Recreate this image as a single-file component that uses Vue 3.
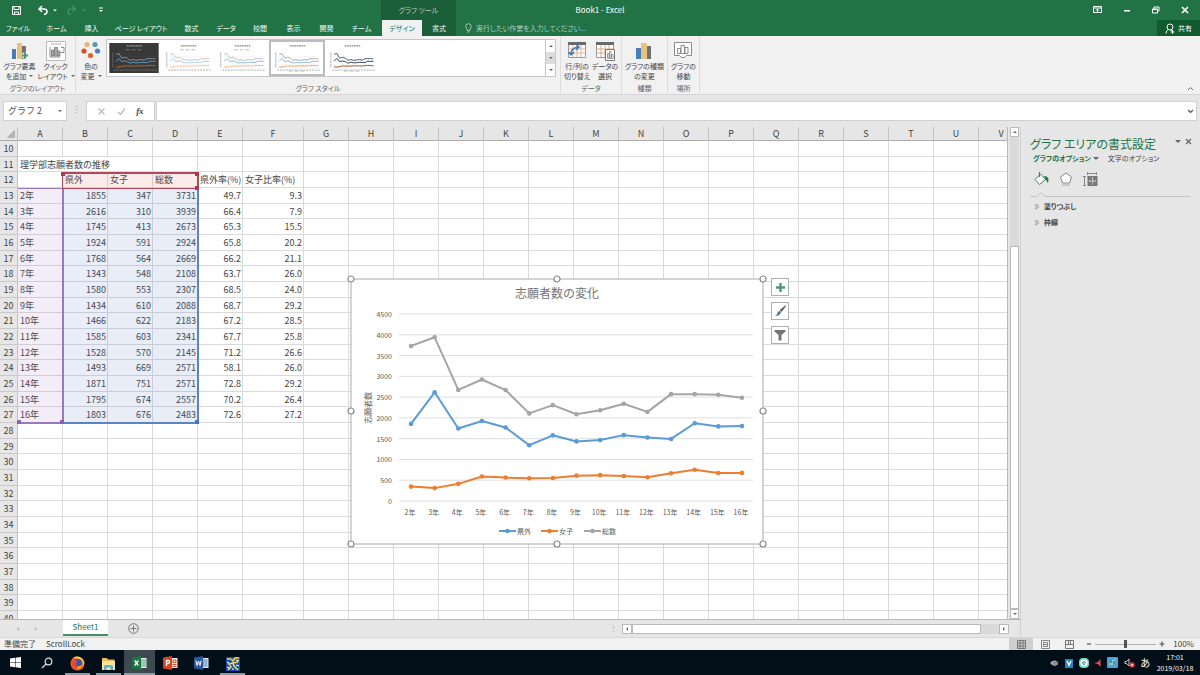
<script setup>
import { ref } from 'vue'

const tabs = ['ファイル', 'ホーム', '挿入', 'ページ レイアウト', '数式', 'データ', '校閲', '表示', '開発', 'チーム', 'デザイン', '書式']
const columns = 'ABCDEFGHIJKLMNOPQRSTUV'.split('')

const records = [
  ['2年', 1855, 347, 3731, '49.7', '9.3'],
  ['3年', 2616, 310, 3939, '66.4', '7.9'],
  ['4年', 1745, 413, 2673, '65.3', '15.5'],
  ['5年', 1924, 591, 2924, '65.8', '20.2'],
  ['6年', 1768, 564, 2669, '66.2', '21.1'],
  ['7年', 1343, 548, 2108, '63.7', '26.0'],
  ['8年', 1580, 553, 2307, '68.5', '24.0'],
  ['9年', 1434, 610, 2088, '68.7', '29.2'],
  ['10年', 1466, 622, 2183, '67.2', '28.5'],
  ['11年', 1585, 603, 2341, '67.7', '25.8'],
  ['12年', 1528, 570, 2145, '71.2', '26.6'],
  ['13年', 1493, 669, 2571, '58.1', '26.0'],
  ['14年', 1871, 751, 2571, '72.8', '29.2'],
  ['15年', 1795, 674, 2557, '70.2', '26.4'],
  ['16年', 1803, 676, 2483, '72.6', '27.2'],
]

const rows = []
for (let n = 10; n <= 40; n++) {
  const cells = columns.map(() => ({ text: '', span: 1 }))
  if (n === 11) cells.splice(0, 3, { text: '理学部志願者数の推移', span: 3 })
  if (n === 12) ['', '県外', '女子', '総数', '県外率(%)', '女子比率(%)'].forEach((t, i) => { cells[i].text = t })
  if (n >= 13 && n <= 27) records[n - 13].forEach((t, i) => { cells[i].text = t; cells[i].num = i > 0 })
  rows.push({ n, cells })
}

const px = i => 60 + (i * 331) / 14
const py = v => 222 - (v * 187) / 4500
const series = [
  { name: '総数', col: 3, color: '#a5a5a5', lx: 233 },
  { name: '県外', col: 1, color: '#5b9bd5', lx: 148 },
  { name: '女子', col: 2, color: '#ed7d31', lx: 190 },
].map(s => ({ ...s, pts: records.map((r, i) => [px(i), py(r[s.col])]) }))
const line = pts => pts.map(p => p.join(',')).join(' ')
const ticks = [0, 500, 1000, 1500, 2000, 2500, 3000, 3500, 4000, 4500]
const handles = [[0, 0], [206, 0], [412, 0], [0, 132], [412, 132], [0, 265], [206, 265], [412, 265]]

const mini = col => records.map((r, i) => `${7 + i * 2.9},${26 - r[col] / 260}`).join(' ')
const styles = [
  { key: 'a', dark: true, c: ['#87919a', '#5e9bc8', '#b36b3c'], legend: 7 },
  { key: 'b', c: ['#c3c8cc', '#acd0ec', '#f5c09c'], legend: 7 },
  { key: 'c', c: ['#bcc0c4', '#90bce2', '#f1b088'], legend: 7 },
  { key: 'd', selected: true, c: ['#aaaeb2', '#8fb8dc', '#eb9d6c'], legend: 29 },
  { key: 'e', c: ['#3f5f82', '#39424c', '#9a5030'], legend: 29 },
]
const zoom = ref(50)
const nameBox = ref('グラフ 2')
const formula = ref('')
</script>

<template>
  <div class="app">
    <header class="titlebar">
      <div class="title-left">
        <div class="qat">
          <button aria-label="上書き保存"><svg width="11" height="11" viewBox="0 0 11 11" fill="none" stroke="#fff"><path d="M1.5 1.5h8v8h-8zM3 1.5v3h5v-3M3.5 9.500v-2.500h4v2.500" /></svg></button>
          <button aria-label="元に戻す"><svg width="20" height="11" viewBox="0 0 20 11" fill="none" stroke="#fff" stroke-width="1.500"><path d="M5 1L2 4l3 3M2 4h5q3 0 3 2.500T7 9.500" /><path d="M16 4.500h4l-2 2z" fill="#fff" stroke="none" /></svg></button>
          <button aria-label="やり直し"><svg width="20" height="11" viewBox="0 0 20 11" fill="none" stroke="#4e9470" stroke-width="1.200"><path d="M6.500 1l3 3-3 3M9.500 4h-5Q2 4 2 6.500T4.500 9.500" /><path d="M16 4.500h4l-2 2z" fill="#4e9470" stroke="none" /></svg></button>
          <button aria-label="カスタマイズ"><svg width="6" height="8" viewBox="0 0 6 8"><path d="M1 1.500h4v1H1zM1 4h4L3 6z" fill="#fff" /></svg></button>
        </div>
        <div class="context">グラフ ツール</div>
      </div>
      <div class="doc">Book1 - Excel</div>
      <div class="win">
        <button aria-label="リボンの表示オプション"><svg width="9" height="8" fill="none" stroke="#fff"><path d="M.5.5h8v6h-8zM.5 2h8M4.500 6V3M3 4.500L4.500 3 6 4.500" /></svg></button>
        <button aria-label="最小化"><svg width="8" height="8"><path d="M1 4h6v1.500H1z" fill="#fff" /></svg></button>
        <button aria-label="元のサイズ"><svg width="8" height="8" fill="none" stroke="#fff"><path d="M.5 3h5v4h-5zM2 3V1h5v4H5.500M.5 3.500h5" /></svg></button>
        <button aria-label="閉じる"><svg width="8" height="8" stroke="#fff" stroke-width="1.700"><path d="M1 1l6 6M7 1L1 7" /></svg></button>
      </div>
    </header>
    <nav class="tabs">
      <div class="tablist">
        <button v-for="(t, i) in tabs" :key="t" :class="{ active: i === 10, ctx: i === 11 }">{{ t }}</button>
      </div>
      <button class="tell"><svg width="7" height="11" viewBox="0 0 7 11" fill="none" stroke="#c5dccf" stroke-width=".8"><path d="M2.300 7.500Q2.300 6 1.300 5 .2 3 1.300 1.600q2.200-2 4.400 0 1.100 1.400 0 3.400-1 1-1 2.500zM2.300 9h2.400" /></svg>実行したい作業を入力してください...</button>
      <button class="share"><svg width="10" height="11" viewBox="0 0 10 11" fill="none" stroke="#fff"><circle cx="5" cy="4" r="3" /><path d="M1 10.500Q1 7.500 3.500 6.500M6 7l1 1M7.500 7v4M5.500 9h4" /></svg>共有</button>
    </nav>

    <section class="ribbon">
      <div class="group g1">
        <div class="tools">
          <button class="big"><svg width="20" height="20" viewBox="0 0 20 20"><path d="M2 8h4v10H2z" fill="#4a7ebb" /><path d="M7 2h5v16H7z" fill="#e8c37b" /><path d="M12 5h4v13h-4z" fill="#6d7373" /><path d="M12 14.500h6M15 11.500v6" stroke="#eef0ee" stroke-width="4" /><path d="M12 14.500h6M15 11.500v6" stroke="#4a9b74" stroke-width="2" /></svg>グラフ要素<br>を追加<i class="dd" /></button>
          <button class="big"><svg width="20" height="20" viewBox="0 0 20 20" fill="none" stroke="#8b8b8b"><path d="M.5.5h19v19H.5z" fill="#fff" stroke="#bbb" /><path d="M5 3h10" stroke-dasharray="1.500 .7" /><path d="M4 6v10h10" /><path d="M5.500 9h2v6h-2zM8.500 6.500h3v8.500h-3zM12 10h2v5h-2z" fill="#aaa" /><path d="M15 6.500h3v5h-3" /></svg>クイック<br>レイアウト<i class="dd" /></button>
        </div>
        <div class="caption">グラフのレイアウト</div>
      </div>
      <div class="group g2">
        <div class="tools">
          <button class="big color"><svg width="20" height="20" viewBox="0 0 20 20"><circle cx="6" cy="3.500" r="2.600" fill="#eab676" /><circle cx="14" cy="3.500" r="2.600" fill="#5b9ca6" /><circle cx="3" cy="10" r="2.600" fill="#d0532b" /><circle cx="16.500" cy="10" r="2.600" fill="#4c83bd" /><circle cx="9.500" cy="14.500" r="2.600" fill="#e2632b" /></svg>色の<br>変更<i class="dd" /></button>
          <div class="gallery">
            <button v-for="s in styles" :key="s.key" class="thumb" :class="{ selected: s.selected }" :aria-label="'スタイル ' + s.key">
              <svg width="50" height="30" viewBox="0 0 51 31" fill="none">
                <rect width="51" height="31" :fill="s.dark ? '#383838' : '#fff'" />
                <path d="M18 3h16" :stroke="s.dark ? '#999' : '#888'" stroke-width="1.300" stroke-dasharray="1.800 .6" />
                <path d="M3.500 10v16" :stroke="s.dark ? '#6a6a6a' : '#aaa'" stroke-width="1.500" stroke-dasharray="1 1" />
                <path d="M5 28h44" :stroke="s.dark ? '#888' : '#999'" stroke-dasharray="2 1" stroke-width=".8" />
                <path :d="`M17 ${s.legend}h17`" :stroke="s.dark ? '#888' : '#aaa'" stroke-dasharray="4 2" stroke-width=".8" />
                <path d="M6 14h43M6 18h43M6 22h43M6 26h43" :stroke="s.dark ? '#484848' : '#eee'" stroke-width=".5" />
                <polyline v-for="(col, i) in [3, 1, 2]" :key="col" :points="mini(col)" :stroke="s.c[i]" />
              </svg>
            </button>
            <div class="gscroll">
              <button aria-label="上へ"><i class="up" /></button>
              <button aria-label="下へ" class="mid"><i class="down" /></button>
              <button aria-label="その他"><i class="down more" /></button>
            </div>
          </div>
        </div>
        <div class="caption">グラフ スタイル</div>
      </div>
      <div class="group g3">
        <div class="tools">
          <button class="big"><svg width="20" height="20" viewBox="0 0 20 20" fill="none"><path d="M1.500 1.500h17v15h-17z" fill="#fff" stroke="#999" /><path d="M1 1h18v3H1z" fill="#696969" /><path d="M6 4v12M10 4v12M14 4v12M2 8h16M2 12h16" stroke="#e0b294" /><path d="M4 13Q4 7 11 6M9 3.500L12 6 9 9M1.500 11L4 14l3-3" stroke="#3a78b5" stroke-width="1.500" /></svg>行/列の<br>切り替え</button>
          <button class="big"><svg width="20" height="20" viewBox="0 0 20 20" fill="none"><path d="M1.500 1.500h17v15h-17z" fill="#fff" stroke="#999" /><path d="M1 1h18v3H1z" fill="#696969" /><path d="M6 4v12M10 4v12M14 4v12M2 8h16M2 12h16" stroke="#d8a98e" /><path d="M10.500 8.500h9v11h-9z" fill="#fff" stroke="#777" /><path d="M12.500 12.500h1.500v5h-1.500zM14.500 10.500H16v7h-1.500zM16.500 13.500H18v4h-1.500z" stroke="#777" stroke-width=".7" /></svg>データの<br>選択</button>
        </div>
        <div class="caption">データ</div>
      </div>
      <div class="group g4">
        <div class="tools">
          <button class="big"><svg width="20" height="20" viewBox="0 0 20 20"><path d="M2 7h5v11H2z" fill="#4a7ebb" /><path d="M7 2h6v16H7z" fill="#e8c37b" /><path d="M13 5h4v13h-4z" fill="#6d7373" /></svg>グラフの種類<br>の変更</button>
        </div>
        <div class="caption">種類</div>
      </div>
      <div class="group g5">
        <div class="tools">
          <button class="big"><svg width="20" height="20" viewBox="0 0 20 20" fill="none" stroke="#8b8b8b"><path d="M1.500 1.500h17v13h-5l-2 2h-3l-2-2h-5z" fill="#fff" /><path d="M4.500 7.500h3v5h-3zM8 4.500h3.500v8H8zM12 6.500h3v6h-3z" /></svg>グラフの<br>移動</button>
        </div>
        <div class="caption">場所</div>
      </div>
      <button class="collapse" aria-label="リボンを折りたたむ"><svg width="7" height="5" fill="none" stroke="#666"><path d="M1 4l2.500-2.500L6 4" /></svg></button>
    </section>

    <section class="formula">
      <div class="namebox"><input v-model="nameBox" aria-label="名前ボックス"><i class="dd" /></div>
      <span class="dots">⋮</span>
      <div class="fx">
        <button aria-label="キャンセル"><svg width="9" height="9" stroke="#bbb" stroke-width="1.300"><path d="M1.500 1.500l6 6M7.500 1.500l-6 6" /></svg></button>
        <button aria-label="入力"><svg width="9" height="9" fill="none" stroke="#bbb" stroke-width="1.300"><path d="M1 5l2.500 2.500L8 1.500" /></svg></button>
        <button class="fn" aria-label="関数の挿入"><em>fx</em></button>
      </div>
      <div class="finput"><input v-model="formula" aria-label="数式バー"><svg width="7" height="5" fill="none" stroke="#555" stroke-width="1.200"><path d="M1 1l2.500 2.500L6 1" /></svg></div>
    </section>

    <main class="work">
      <div class="book">
        <div class="sheetrow">
          <div class="sheet">
            <table>
              <colgroup><col class="rh"><col v-for="c in columns" :key="c" :class="{ wide: c === 'F' }"></colgroup>
              <thead><tr><th class="corner"><i /></th><th v-for="c in columns" :key="c" scope="col">{{ c }}</th></tr></thead>
              <tbody>
                <tr v-for="r in rows" :key="r.n">
                  <th scope="row">{{ r.n }}</th>
                  <td v-for="(c, i) in r.cells" :key="i" :colspan="c.span" :class="{ num: c.num }">{{ c.text }}</td>
                </tr>
              </tbody>
            </table>
            <div class="range purple"><i class="bl" /><i class="br" /></div>
            <div class="range blue"><i class="br" /></div>
            <div class="range red"><i class="tl" /><i class="tr" /><i class="br" /></div>
            <svg class="chart" width="424" height="276" viewBox="-6 -6 424 276">
              <rect x="0" y="0" width="412" height="265" fill="#fff" stroke="#a9a9a9" />
              <text x="206" y="19" class="ctitle">志願者数の変化</text>
              <g v-for="t in ticks" :key="t">
                <line x1="48" x2="402" :y1="py(t)" :y2="py(t)" stroke="#dedede" />
                <text x="41" :y="py(t) + 3" class="ylab">{{ t }}</text>
              </g>
              <text v-for="(r, i) in records" :key="r[0]" :x="px(i) - 1" y="236" class="xlab">{{ r[0] }}</text>
              <text transform="translate(20 129) rotate(-90)" class="atitle">志願者数</text>
              <g v-for="s in series" :key="s.name" :stroke="s.color" :fill="s.color">
                <polyline :points="line(s.pts)" fill="none" stroke-width="2" stroke-linejoin="round" />
                <circle v-for="(p, i) in s.pts" :key="i" :cx="p[0]" :cy="p[1]" r="2.300" stroke="none" />
                <line :x1="s.lx" :x2="s.lx + 17" y1="252" y2="252" stroke-width="2" />
                <circle :cx="s.lx + 8.5" cy="252" r="2.300" stroke="none" />
                <text :x="s.lx + 18" y="255" class="leg">{{ s.name }}</text>
              </g>
              <circle v-for="(h, i) in handles" :key="'h' + i" :cx="h[0]" :cy="h[1]" r="3" fill="#fff" stroke="#8a8a8a" stroke-width="1.200" />
            </svg>
            <div class="chartbtns">
              <button aria-label="グラフ要素"><svg width="11" height="11"><path d="M1 5.500h9M5.500 1v9" stroke="#4d9a78" stroke-width="2.400" /></svg></button>
              <button aria-label="グラフ スタイル"><svg width="12" height="12"><path d="M11.500.5L6 5l1.500 1.800L11.500 1.500z" fill="#666" stroke="#666" stroke-width=".6" /><path d="M5.500 5.500L7 7.500Q6 11 1 11 3.500 9.500 3.500 7.500z" fill="#477fae" /></svg></button>
              <button aria-label="グラフ フィルター"><svg width="12" height="12"><path d="M.5 1h11v1.500L7.500 6v5.500h-3V6L.5 2.500z" fill="#757575" /></svg></button>
            </div>
          </div>
          <div class="vscroll">
            <button aria-label="上へスクロール"><i class="up" /></button>
            <div class="vtrack"><div class="vthumb" /></div>
            <button aria-label="下へスクロール"><i class="down" /></button>
          </div>
        </div>
        <div class="sheettabs">
          <div class="navs"><button aria-label="前のシート"><i class="left" /></button><button aria-label="次のシート"><i class="right" /></button></div>
          <button class="stab">Sheet1</button>
          <button class="add" aria-label="新しいシート"><svg width="11" height="11" fill="none" stroke="#777"><circle cx="5.500" cy="5.500" r="4.800" /><path d="M2.500 5.500h6M5.500 2.500v6" /></svg></button>
          <span class="grip">⋮</span>
          <div class="hscroll">
            <button aria-label="左へスクロール"><i class="left" /></button>
            <div class="htrack"><div class="hthumb" /></div>
            <button aria-label="右へスクロール"><i class="right" /></button>
          </div>
        </div>
      </div>
      <aside class="pane">
        <div class="phead"><h2>グラフ エリアの書式設定</h2>
          <div class="pctl"><button aria-label="作業ウィンドウ オプション"><i class="dd" /></button><button aria-label="作業ウィンドウを閉じる"><svg width="7" height="7" stroke="#666" stroke-width="1.300"><path d="M1 1l5 5M6 1L1 6" /></svg></button></div>
        </div>
        <div class="popts"><button class="on">グラフのオプション</button><i class="dd" /><button>文字のオプション</button></div>
        <div class="picons">
          <button aria-label="塗りつぶしと線"><svg width="16" height="16" fill="none"><path d="M2 8.500L7.500 3l5 5.500-6 5z" fill="#fff" stroke="#4a7a62" /><path d="M6.500 1v5" stroke="#4a7a62" stroke-width="1.200" /><path d="M11 5q3.500-.5 4.500 3.500l-.5 3.500-2-3z" fill="#217346" /></svg></button>
          <button aria-label="効果"><svg width="16" height="16"><path d="M8 2l5.500 4-2 6h-7l-2-6z" fill="#fff" stroke="#888" /><path d="M4 14h8" stroke="#aaa" /></svg></button>
          <button aria-label="サイズとプロパティ"><svg width="16" height="16" fill="none"><path d="M4 2.500h10M4.500 1v3M13.500 1v3M1.500 5v10M0 5.500h3M0 14.500h3" stroke="#888" /><path d="M4.500 5h10v10h-10z" fill="#777" /><path d="M9.500 6.500v7M6 10h7" stroke="#ddd" stroke-width="1.300" stroke-dasharray="2 1" /></svg></button>
        </div>
        <svg class="notch" width="160" height="6" viewBox="0 0 160 6" fill="none" stroke="#c4c4c4"><path d="M0 5.500h7l4-4 4 4h145" /></svg>
        <button class="sect"><svg width="5" height="7" fill="none" stroke="#888" stroke-width=".8"><path d="M1 1l3 2.500L1 6z" /></svg>塗りつぶし</button>
        <button class="sect"><svg width="5" height="7" fill="none" stroke="#888" stroke-width=".8"><path d="M1 1l3 2.500L1 6z" /></svg>枠線</button>
      </aside>
    </main>

    <footer class="status">
      <span>準備完了</span><span>ScrollLock</span>
      <div class="views">
        <button class="on" aria-label="標準"><svg width="9" height="9" fill="none" stroke="#777"><path d="M.5.5h8v8h-8zM3 .5v8M6 .5v8M.5 3h8M.5 6h8" /></svg></button>
        <button aria-label="ページ レイアウト表示"><svg width="9" height="9" fill="none" stroke="#888"><path d="M.5.5h8v8h-8zM2.500 2.500h4v4h-4zM3 4.500h3" /></svg></button>
        <button aria-label="改ページ プレビュー"><svg width="9" height="9" fill="none" stroke="#777"><path d="M.5.5h8v8h-8zM3.500.5v4M5.500.5v4M.5 4.500h8" /></svg></button>
      </div>
      <button class="zb" aria-label="縮小"><svg width="6" height="6"><path d="M1 3h4" stroke="#555" stroke-width="1.200" /></svg></button>
      <input v-model="zoom" class="zoom" type="range" min="0" max="100" aria-label="ズーム">
      <button class="zb" aria-label="拡大"><svg width="6" height="6"><path d="M.5 3h5M3 .5v5" stroke="#555" stroke-width="1.200" /></svg></button>
      <button class="pct">100%</button>
    </footer>

    <footer class="taskbar">
      <button aria-label="スタート"><svg width="11" height="11" fill="#fff"><path d="M0 1.500L5 .8v4.400H0zM5.500.7L11 0v5.200H5.500zM0 5.700h5v4.500L0 9.500zM5.500 5.700H11V11l-5.500-.8z" /></svg></button>
      <button aria-label="検索"><svg width="12" height="12" fill="none" stroke="#ddd" stroke-width="1.200"><circle cx="7.500" cy="4.500" r="3.300" /><path d="M5 7L1 11" /></svg></button>
      <button class="run" aria-label="Firefox"><svg width="15" height="15" viewBox="0 0 15 15"><circle cx="7.500" cy="7.500" r="7" fill="#f36a21" /><path d="M3 1.500Q8-1 12.500 3q3 4 .5 8 1-7-4-8z" fill="#ffce35" /><circle cx="7.800" cy="7" r="4" fill="#3158a7" /><path d="M1 5Q3 2 6 4.500L8 6 5.500 7q0 3 3.500 3.500 2 0 3-1.500Q11 14 6.500 13.500 1 12 1 5z" fill="#f6452c" /><path d="M8 10.500q3 0 4-2-1 4.500-5 4.500z" fill="#ffb12b" /></svg></button>
      <button class="run" aria-label="エクスプローラー"><svg width="15" height="14" viewBox="0 0 15 14"><path d="M1 1h5l1 1.500h6.500V13H1z" fill="#e7bd5b" /><path d="M1 4h13v9H1z" fill="#fbe49a" /><path d="M3 13V9.500Q3 8 4.500 8h6Q12 8 12 9.500V13h-2.500v-2.500h-4V13z" fill="#58b3cf" /></svg></button>
      <button class="run cur" aria-label="Excel"><svg width="15" height="14" viewBox="0 0 15 14"><path d="M8 2h6.500v10H8z" fill="#e7f1ea" /><path d="M9 4h5M9 6h5M9 8h5M9 10h5" stroke="#4e9b70" /><path d="M0 1.500L9 0v14L0 12.500z" fill="#1e7244" /><path d="M2.700 4.500l3.600 5M6.300 4.500l-3.600 5" stroke="#fff" stroke-width="1.300" /></svg></button>
      <button aria-label="PowerPoint"><svg width="15" height="14" viewBox="0 0 15 14"><path d="M8 2h6.500v10H8z" fill="#fbe6df" /><path d="M9.500 8.500h4M9.500 10.500h4M10 4h3v2.500h-3z" stroke="#d35230" fill="none" /><path d="M0 1.500L9 0v14L0 12.500z" fill="#d24625" /><path d="M3.500 10V4.500h1.700q1.300 0 1.300 1.500T5 7.500H3.500" fill="none" stroke="#fff" stroke-width="1.300" /></svg></button>
      <button aria-label="Word"><svg width="15" height="14" viewBox="0 0 15 14"><path d="M8 2h6.500v10H8z" fill="#e3eaf6" /><path d="M9 4h4.500M9 6h4.500M9 8h4.500M9 10h4.500" stroke="#4472b8" /><path d="M0 1.500L9 0v14L0 12.500z" fill="#2a5699" /><path d="M1.800 4.500l1.200 5L4.500 5 6 9.500l1.200-5" fill="none" stroke="#fff" /></svg></button>
      <button class="run" aria-label="アプリ"><svg width="14" height="14" viewBox="0 0 14 14" fill="none"><path d="M0 0h14v14H0z" fill="#1b47b9" /><path d="M1 2h4l2 2 2-3h4M2 13l3-3-2-3 4-1 5-1M7 6l1 3 4 4" stroke="#f2df45" stroke-width="1.600" /><path d="M1 5l2 1M10 3l3 1M1 10l2 1M10 8l3 1M6 12h2" stroke="#fff" stroke-width="1.200" /><path d="M6 2v1M4 8v1M12 11v1" stroke="#4fc25c" stroke-width="1.500" /></svg></button>
      <div class="tray">
        <svg width="10" height="10"><path d="M1 5q2-3 5-2.500L9 4v2.500L6 8Q3 8 1 5z" fill="#aaa" /><path d="M4 4.500h5M4 6h5" stroke="#666" stroke-width=".7" /></svg>
        <svg width="10" height="10"><rect x="1" y="1" width="8" height="9" fill="#2286c7" /><path d="M3 3l2 4 2-4" fill="none" stroke="#fff" stroke-width="1.600" /></svg>
        <svg width="10" height="10"><rect width="10" height="10" rx="4" fill="#6ed6c5" /><circle cx="5" cy="5" r="3.600" fill="#fff" /><path d="M3.500 5h3q0-1.500-1.500-1.500T3.500 5 5 6.500h1.200" fill="none" stroke="#25917f" stroke-width=".8" /></svg>
        <svg width="8" height="10"><path d="M6.500 1v8L4 6 0 5l4-1z" fill="#e8524b" /></svg>
        <svg width="12" height="11"><rect width="11" height="11" rx="1" fill="#4aa4dc" /><path d="M2 8q1-6 7-6L6 8z" fill="#90c7b5" /><path d="M4 3v3M7 4v3" stroke="#315d91" /></svg>
        <svg width="11" height="11" fill="none"><path d="M1 4.500h1.500L5 2v7L2.500 6.500H1z" stroke="#ddd" stroke-width=".9" /><circle cx="8" cy="8" r="2.800" fill="#dc3838" /><path d="M7 7l2 2M9 7L7 9" stroke="#fff" stroke-width=".8" /></svg>
        <span class="ime">あ</span>
      </div>
      <div class="clock"><span>17:01</span><span>2019/03/18</span></div>
    </footer>
  </div>
</template>

<style>
body { margin: 0; overflow: hidden; }
</style>

<style scoped>
.app { height: 100vh; display: flex; flex-direction: column; background: #e6e6e6; color: #444; font: 7px/10px "Noto Sans CJK JP", "Noto Sans", sans-serif; font-feature-settings: "palt"; white-space: nowrap; overflow: hidden; }
.app * { box-sizing: border-box; }
button { border: 0; padding: 0; margin: 0; background: none; font: inherit; color: inherit; font-feature-settings: inherit; white-space: nowrap; display: flex; align-items: center; justify-content: center; }
input { border: 0; padding: 0; margin: 0; background: none; font: inherit; color: inherit; min-width: 0; outline: none; }
svg { display: block; flex: none; }
i { display: inline-block; flex: none; }
.dd, .down { border: 2px solid transparent; border-top-color: #666; border-bottom: 0; }
.up { border: 2px solid transparent; border-bottom-color: #666; border-top: 0; }
.left { border: 2px solid transparent; border-right-color: #666; border-left: 0; }
.right { border: 2px solid transparent; border-left-color: #666; border-right: 0; }

.titlebar { display: grid; grid-template-columns: 1fr auto 1fr; height: 20px; background: #217346; color: #fff; }
.title-left { display: flex; }
.qat { width: 381px; display: flex; align-items: center; gap: 9px; padding-left: 11px; }
.qat button:nth-child(1) { margin-right: 6px; }
.qat button:nth-child(4) { margin-left: 3px; }
.context { width: 75px; background: #1b5f3a; color: #b6cfc1; display: flex; align-items: center; justify-content: center; }
.doc { font-size: 8px; display: flex; align-items: center; }
.win { display: flex; justify-content: flex-end; align-items: center; gap: 21px; padding-right: 11px; }

.tabs { display: flex; height: 16px; background: #217346; color: #f0f7f3; }
.tablist { display: grid; grid-template-columns: 36px 41px 29px 70px 31px 38px 30px 37px 29px 41px 40px 34px; }
.tabs .active { background: #f1f1f1; color: #217346; }
.tabs .ctx { background: #1b5f3a; }
.tell { color: #a9cbb8; gap: 4px; margin-left: 9px; }
.share { margin-left: auto; width: 43px; background: #0f5a2f; color: #fff; gap: 3px; }

.ribbon { display: flex; position: relative; height: 59px; background: #f1f1f1; border-bottom: 1px solid #d5d5d5; }
.group { display: flex; flex-direction: column; justify-content: space-between; padding: 3px 0 1px; border-right: 1px solid #dcdcdc; }
.tools { display: flex; justify-content: center; }
.caption { text-align: center; color: #666; }
.big { flex-direction: column; display: block; text-align: center; height: 42px; }
.big svg { margin: 1px auto 0; }
.big .dd { margin: 0 0 2px 3px; }
.g1 { width: 76px; }
.g1 .big { width: 36px; }
.g2 { width: 485px; }
.g2 .tools { justify-content: flex-start; }
.color { width: 30px; }
.g3 { width: 61px; }
.g3 .big { width: 28px; }
.g4 { width: 46px; }
.g5 { width: 32px; }
.gallery { display: flex; align-items: center; width: 450px; height: 38px; background: #fff; border: 1px solid #c6c6c6; }
.thumb { width: 54px; height: 36px; }
.thumb.selected { width: 56px; border: 2px solid #bdbdbd; }
.gscroll { margin-left: auto; align-self: stretch; width: 10px; display: grid; grid-template-rows: repeat(3, 1fr); border-left: 1px solid #c6c6c6; }
.gscroll .mid { background: #ddd; }
.gscroll .more { border-top-color: #666; box-shadow: 0 -2px 0 -1px #666; }
.collapse { position: absolute; right: 6px; bottom: 3px; }

.formula { display: flex; height: 20px; margin: 6px 3px 6px; }
.namebox { width: 64px; background: #fff; border: 1px solid #d0d0d0; display: flex; align-items: center; padding: 0 4px; font-size: 9px; color: #555; }
.namebox input { flex: 1; font-feature-settings: normal; }
.dots { width: 19px; text-align: center; line-height: 18px; font-size: 9px; color: #999; }
.fx { width: 69px; background: #fff; border: 1px solid #d0d0d0; display: flex; justify-content: space-evenly; }
.fn { font: bold 9px/10px "Liberation Serif", serif; }
.finput { flex: 1; margin-left: 1px; background: #fff; border: 1px solid #d0d0d0; display: flex; align-items: center; padding: 0 2px; }
.finput input { flex: 1; }

.work { flex: 1; min-height: 0; display: flex; }
.book { flex: 1; min-width: 0; display: flex; flex-direction: column; }
.sheetrow { flex: 1; min-height: 0; display: flex; }
.sheet { flex: 1; min-width: 0; position: relative; overflow: hidden; border-right: 1px solid #b8b8b8; font-size: 9px; font-feature-settings: normal; }
table { border-collapse: separate; border-spacing: 0; table-layout: fixed; width: 1024px; background: #fff; }
col { width: 45px; }
col.rh { width: 18px; }
col.wide { width: 61px; }
th { font-weight: 400; background: #e6e6e6; padding: 0; border-right: 1px solid #c3c3c3; border-bottom: 1px solid #c9c9c9; line-height: 13px; color: #444; }
thead th { height: 14px; border-bottom-color: #ababab; }
.corner i { display: block; margin: 0 2px 0 auto; width: 9px; height: 9px; background: linear-gradient(135deg, transparent 50%, #b5b5b5 50%); }
tbody tr { height: 16px; }
tbody tr:nth-child(3n+2) { height: 15px; }
td { padding: 0 1px 0 2px; border-right: 1px solid #dadada; border-bottom: 1px solid #dadada; line-height: 13px; }
.num { text-align: right; }
.range { position: absolute; }
.range i { position: absolute; width: 4px; height: 4px; }
.purple { left: 18px; top: 61px; width: 46px; height: 236px; background: #8f5fb61c; border: 1px solid #9a78bd; border-left: 0; border-right-width: 2px; border-bottom-width: 2px; }
.purple i { background: #8b62b0; }
.blue { left: 64px; top: 61px; width: 135px; height: 236px; background: #4472c420; border: 2px solid #5b84c2; border-left: 0; border-top: 0; }
.blue i { background: #4472c4; }
.red { left: 62px; top: 45px; width: 137px; height: 17px; background: #e04a4a1c; border: 2px solid #b5475a; border-left-width: 1px; border-bottom-width: 1px; }
.red i { background: #b0384c; }
.tl { left: -2px; top: -2px; }
.tr { right: -2px; top: -2px; }
.bl { left: -1px; bottom: -2px; }
.br { right: -2px; bottom: -2px; }
.chart { position: absolute; left: 345px; top: 146px; }
.chart text { stroke: none; fill: #595959; font-size: 7px; }
.chart .ctitle { font-size: 12px; text-anchor: middle; fill: #757575; }
.chart .ylab { text-anchor: end; }
.chart .xlab { text-anchor: middle; }
.chart .atitle { font-size: 8px; text-anchor: middle; }
.chart .leg { font-size: 7px; }
.chartbtns { position: absolute; left: 771px; top: 151px; display: flex; flex-direction: column; gap: 6px; }
.chartbtns button { width: 18px; height: 18px; background: #fff; border: 1px solid #b0b0b0; }

.vscroll { width: 13px; padding: 0 1px 0 2px; display: flex; flex-direction: column; border-right: 1px solid #d2d2d2; }
.vscroll button, .hscroll button { background: #fff; border: 1px solid #b9b9b9; height: 10px; width: 10px; flex: none; }
.vscroll button { width: 100%; }
.vtrack { flex: 1; background: #dadada; display: flex; flex-direction: column; justify-content: flex-end; }
.vthumb { height: 77%; background: #fff; border: 1px solid #b9b9b9; }
.sheettabs { height: 18px; display: flex; border-top: 1px solid #b8b8b8; border-right: 1px solid #d2d2d2; }
.navs { width: 63px; display: flex; align-items: center; gap: 16px; padding-left: 17px; opacity: .4; }
.stab { width: 45px; height: 16px; background: #fff; color: #217346; font-size: 8px; border-bottom: 2px solid #4c8d69; }
.add { width: 51px; }
.grip { margin-left: auto; width: 18px; text-align: center; line-height: 16px; color: #999; }
.hscroll { width: 39%; display: flex; align-items: center; padding-right: 11px; }
.htrack { flex: 1; background: #dadada; height: 10px; }
.hthumb { width: 95%; height: 10px; background: #fff; border: 1px solid #b9b9b9; }

.pane { width: 179px; padding: 8px 8px 0 9px; display: flex; flex-direction: column; align-items: stretch; }
.phead { display: flex; justify-content: space-between; }
h2 { margin: 0; font-size: 12px; line-height: 17px; font-weight: 400; color: #217346; }
.pctl { display: flex; gap: 4px; height: 12px; }
.popts { display: flex; align-items: center; gap: 2px; padding-left: 3px; height: 12px; }
.popts .on { font-weight: 700; color: #217346; }
.popts .dd, .pctl .dd { border-width: 3px; border-bottom: 0; }
.popts button:last-child { margin-left: 7px; }
.picons { display: flex; gap: 9px; padding: 7px 0 0 3px; }
.notch { margin-top: 4px; }
.sect { justify-content: flex-start; gap: 4px; height: 16px; padding-left: 5px; font-weight: 700; }
.notch + .sect { margin-top: 1px; }

.status { height: 13px; display: flex; align-items: center; background: #f1f1f1; padding: 0 6px 0 4px; gap: 10px; border-top: 1px solid #d8d8d8; font-size: 8px; }
.views { margin-left: auto; display: flex; align-self: stretch; }
.views button { width: 24px; }
.views .on { background: #cfcfcf; }
.views + .zb { margin-left: -5px; }
.zoom { appearance: none; width: 61px; height: 10px; margin: 0 -7px; background: linear-gradient(#b0b0b0, #b0b0b0) center / 100% 1px no-repeat; }
.zoom::-webkit-slider-thumb { appearance: none; width: 3px; height: 8px; background: #555; }
.pct { margin-left: -2px; }

.taskbar { height: 25px; display: flex; background: #020e18; color: #fff; }
.taskbar > button { width: 31px; border-bottom: 2px solid transparent; border-top: 2px solid transparent; }
.taskbar .run { background: linear-gradient(#8b9aa3, #8b9aa3) center bottom / 25px 2px no-repeat; border-bottom: 0; }
.taskbar .cur { background: linear-gradient(#8b9aa3, #8b9aa3) center bottom / 31px 2px no-repeat #3d484f; border-top: 0; }
.tray { margin-left: auto; display: flex; align-items: center; gap: 5px; }
.ime { font-size: 10px; }
.clock { width: 50px; display: flex; flex-direction: column; justify-content: center; text-align: center; line-height: 11px; }
</style>
